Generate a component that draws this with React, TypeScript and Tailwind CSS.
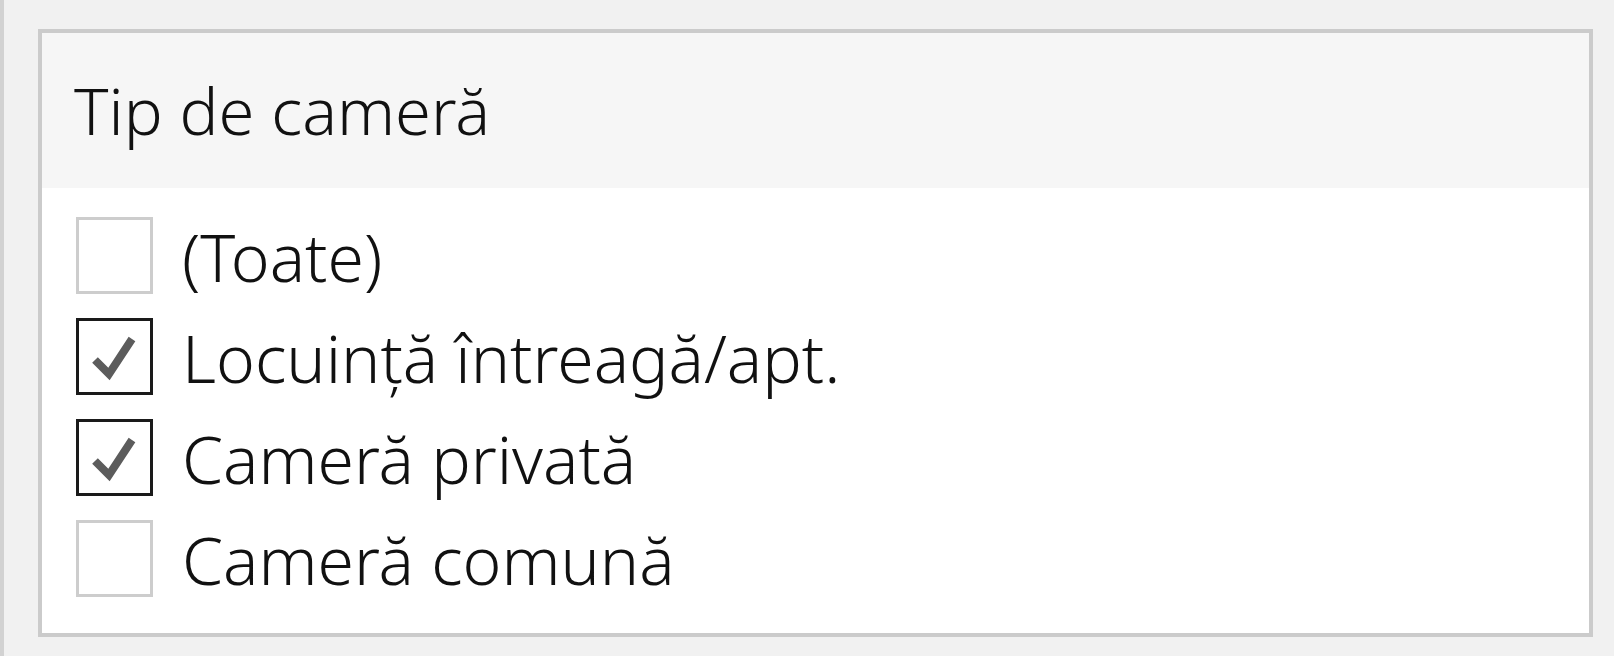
import React from "react";

const items = [
  { label: "(Toate)", checked: false },
  { label: "Locuință întreagă/apt.", checked: true },
  { label: "Cameră privată", checked: true },
  { label: "Cameră comună", checked: false },
];

function Box({ checked }: { checked: boolean }) {
  return (
    <div
      className={
        checked
          ? "w-[77px] h-[77px] shrink-0 border-[3px] border-[#1a1a1a] bg-white relative"
          : "w-[77px] h-[77px] shrink-0 border-[3px] border-[#cdcdcd] bg-white relative"
      }
    >
      {checked && (
        <svg
          className="absolute left-[-3px] top-[-3px]"
          width="77"
          height="77"
          viewBox="0 0 77 77"
        >
          <path
            d="M19 42 L33 56 L56 21"
            fill="none"
            stroke="#5c5c5c"
            strokeWidth="8"
            strokeLinejoin="miter"
          />
        </svg>
      )}
    </div>
  );
}

export default function App() {
  return (
    <div
      className="w-[1614px] h-[656px] bg-[#f1f1f1] flex overflow-hidden"
      style={{ fontFamily: '"Noto Sans", "Open Sans", sans-serif' }}
    >
      <div className="w-[4px] h-full bg-[#d2d2d2]" />
      <div className="pl-[34px] pt-[29px]">
        <div className="w-[1555px] h-[608px] border-[4px] border-[#cbcbcb] bg-white flex flex-col">
          <div className="h-[155px] bg-[#f6f6f6] flex items-center pl-[32px] text-[65px] font-[350] leading-none text-[#111]">
            Tip de cameră
          </div>
          <div className="flex flex-col gap-[24px] pt-[29px] pl-[34px]">
            {items.map((it) => (
              <div key={it.label} className="flex items-center h-[77px] gap-[29px]">
                <Box checked={it.checked} />
                <span className="text-[66px] font-[350] leading-none text-[#111]">{it.label}</span>
              </div>
            ))}
          </div>
        </div>
      </div>
    </div>
  );
}
